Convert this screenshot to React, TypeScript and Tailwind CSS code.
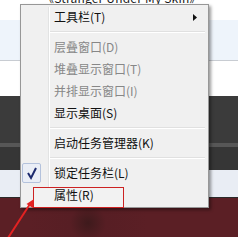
import React from "react";

const cjk = "font-['Noto_Sans_CJK_SC','Microsoft_YaHei',sans-serif]";

function Row({
  label,
  disabled,
  children,
  arrow,
}: {
  label: string;
  disabled?: boolean;
  children?: React.ReactNode;
  arrow?: boolean;
}) {
  return (
    <div className="relative h-[22px] flex items-center pl-[33px] pr-[11px]">
      {children}
      <span
        className={`relative text-[12px] leading-[14px] ${
          disabled ? "text-[#878787]" : "text-[#111111]"
        }`}
      >
        {label}
      </span>
      {arrow && (
        <svg className="ml-auto" width="4" height="7" viewBox="0 0 4 7">
          <polygon points="0,0 4,3.5 0,7" fill="#111" />
        </svg>
      )}
    </div>
  );
}

function Sep() {
  return (
    <div className="h-[8px] flex flex-col justify-center ml-[28px] mr-[3px]">
      <div className="h-px bg-[#e0e0e0]" />
      <div className="h-px bg-white" />
    </div>
  );
}

export default function App() {
  return (
    <div className={`relative w-[238px] h-[237px] overflow-hidden bg-white ${cjk}`}>
      {/* background screen capture */}
      <div className="flex flex-col h-full">
        <div className="h-[20px] bg-white overflow-hidden">
          <div className="-mt-[8px] ml-[42px] text-[12px] leading-[12px] tracking-[0.2px] text-[#1a1a1a] whitespace-nowrap">
            《Stranger Under My Skin》
          </div>
        </div>
        <div className="h-[40px] bg-[#eef4fb]" />
        <div className="h-px bg-[#c8ccd2]" />
        <div className="h-[35px] bg-white" />
        <div className="h-[47px] bg-[#3b3b3b]" />
        <div className="h-[4px] bg-[#575757]" />
        <div className="h-[23px] bg-[#363636]" />
        <div className="h-[27px] bg-[#e9edf4]" />
        <div className="h-px bg-[#2a2a2a]" />
        <div className="flex-1 bg-[radial-gradient(circle_at_88px_25px,#3e1a1c_0px,#571e24_18px,#5b1f25_60px)]" />
      </div>

      {/* context menu */}
      <div className="absolute left-[20px] top-[4px] w-[189px] border border-[#979797] bg-[#f0f0f0] py-[1px] shadow-[2px_2px_3px_rgba(0,0,0,0.4)]">
        <div className="absolute left-[27px] top-[2px] bottom-[2px] w-[2px] flex">
          <div className="w-px bg-[#e2e3e3]" />
          <div className="w-px bg-white" />
        </div>
        <Row label="工具栏(T)" arrow />
        <Sep />
        <Row label="层叠窗口(D)" disabled />
        <Row label="堆叠显示窗口(T)" disabled />
        <Row label="并排显示窗口(I)" disabled />
        <Row label="显示桌面(S)" />
        <Sep />
        <Row label="启动任务管理器(K)" />
        <Sep />
        <Row label="锁定任务栏(L)">
          <div className="absolute left-[1px] top-[1px] w-[19px] h-[20px] border border-[#b4c2dc] bg-[#eaeef6] rounded-[2px] flex items-center justify-center">
            <svg width="17" height="18" viewBox="0 0 17 18">
              <polyline
                points="5,9 8,14 13,4"
                fill="none"
                stroke="#1c2a6e"
                strokeWidth="2"
                strokeLinejoin="miter"
              />
            </svg>
          </div>
        </Row>
        <Row label="属性(R)">
          <div className="absolute left-[12px] top-[3px] w-[91px] h-[21px] border border-[#cc2222] bg-[#f2f2f2]" />
        </Row>
      </div>

      {/* annotation arrow */}
      <svg className="absolute left-0 top-[190px]" width="40" height="47" viewBox="0 0 40 47">
        <line x1="8" y1="48" x2="30" y2="14" stroke="#e32222" strokeWidth="2" />
        <polygon points="34,9 33,18 26.5,14" fill="#e32222" />
      </svg>
    </div>
  );
}
